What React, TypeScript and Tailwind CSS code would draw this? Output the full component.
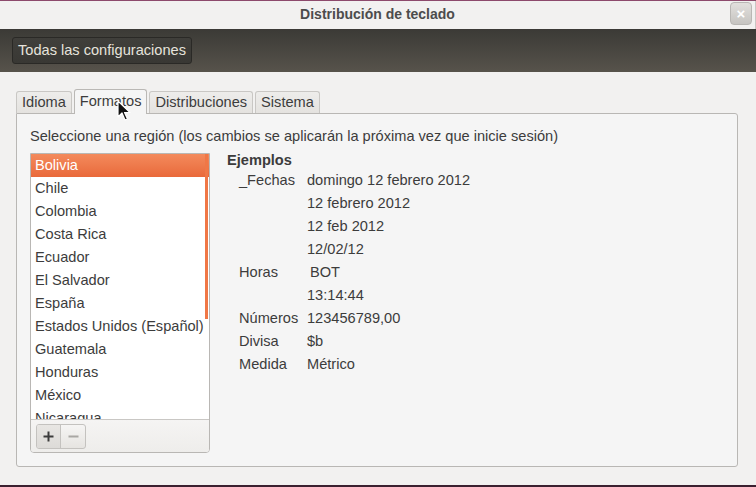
import React from "react";

const regions = [
  "Bolivia",
  "Chile",
  "Colombia",
  "Costa Rica",
  "Ecuador",
  "El Salvador",
  "España",
  "Estados Unidos (Español)",
  "Guatemala",
  "Honduras",
  "México",
  "Nicaragua",
];

const examples: [string, string, string?][] = [
  ["_Fechas", "domingo 12 febrero 2012"],
  ["", "12 febrero 2012"],
  ["", "12 feb 2012"],
  ["", "12/02/12"],
  ["Horas", "BOT", "pl-[3px]"],
  ["", "13:14:44"],
  ["Números", "123456789,00"],
  ["Divisa", "$b"],
  ["Medida", "Métrico"],
];

function Tab({ label, active = false }: { label: string; active?: boolean }) {
  if (active) {
    return (
      <div className="relative z-10 -mb-px flex h-[25px] items-center rounded-t-[3px] border border-b-0 border-[#bab8b5] bg-[#f5f5f5] px-[5px]">
        {label}
      </div>
    );
  }
  return (
    <div className="flex h-[22px] items-center rounded-t-[3px] border border-b-0 border-[#c9c7c4] bg-gradient-to-b from-[#eeedeb] to-[#e4e2df] px-[5px]">
      {label}
    </div>
  );
}

export default function App() {
  return (
    <div
      className="relative flex h-[487px] w-[756px] flex-col overflow-hidden border-t border-[#8d4a6c] bg-[#f2f1f0] text-[14.6px] text-[#3c3c3c]"
      style={{ fontFamily: '"Liberation Sans", Arial, sans-serif' }}
    >
      {/* title bar */}
      <div className="relative flex h-[28px] items-center justify-center border-r border-[#c9c7c4]">
        <span className="-mt-[2px] text-[14px] font-bold text-[#4c4c4c]">Distribución de teclado</span>
        <div className="absolute right-[3px] top-[1px] flex h-[23px] w-[22px] items-center justify-center rounded-[4px] border border-[#b9b7b4] bg-gradient-to-b from-[#e2e0dd] to-[#c6c4c1] text-[15px] font-bold leading-none text-white">
          ×
        </div>
      </div>

      {/* toolbar */}
      <div className="flex h-[43px] items-center bg-gradient-to-b from-[#3b3a36] to-[#57534b] px-3">
        <div className="flex h-[27px] items-center rounded-[3px] border border-[#2a2926] bg-gradient-to-b from-[#403f3b] to-[#393834] px-[5px] text-[#e6e3dc]">
          Todas las configuraciones
        </div>
      </div>

      {/* body */}
      <div className="flex flex-1 flex-col pl-4 pr-[18px] pt-[17px]">
        <div className="flex items-end gap-[2px]">
          <Tab label="Idioma" />
          <Tab label="Formatos" active />
          <Tab label="Distribuciones" />
          <Tab label="Sistema" />
        </div>

        <div className="flex h-[354px] flex-col rounded-b-[3px] rounded-tr-[3px] border border-[#b9b7b4] bg-[#f5f5f5] pl-[13px] pt-[11px]">
          <div className="h-[28px] leading-[22px]">
            Seleccione una región (los cambios se aplicarán la próxima vez que inicie sesión)
          </div>

          <div className="flex gap-[17px]">
            {/* region list */}
            <div className="flex h-[300px] w-[180px] flex-col overflow-hidden rounded-b-[4px] border border-[#b9b7b4] bg-white">
              <div className="relative h-[266px] overflow-hidden">
                {regions.map((r, i) => (
                  <div
                    key={r}
                    className={
                      i === 0
                        ? "flex h-[23px] items-center bg-gradient-to-b from-[#f38a5c] to-[#e9693a] pl-1 text-white"
                        : "flex h-[23px] items-center pl-1"
                    }
                  >
                    {r}
                  </div>
                ))}
                <div className="absolute right-px top-0 h-[165px] w-[3px] bg-[#f07746]" />
              </div>
              <div className="flex h-[33px] items-center border-t border-[#c9c7c4] bg-gradient-to-b from-[#f5f4f3] to-[#eeedeb] pl-[5px]">
                <div className="flex h-[25px] overflow-hidden rounded-[3px] border border-[#c4c2bf] bg-gradient-to-b from-[#f6f5f4] to-[#e6e4e1]">
                  <div className="flex w-[24px] items-center justify-center border-r border-[#c4c2bf] bg-gradient-to-b from-[#e8e6e3] to-[#dddbd8]">
                    <svg width="11" height="11" viewBox="0 0 11 11">
                      <path d="M5.5 0.5v10M0.5 5.5h10" stroke="#3c3c3c" strokeWidth="2" />
                    </svg>
                  </div>
                  <div className="flex w-[24px] items-center justify-center">
                    <svg width="11" height="11" viewBox="0 0 11 11">
                      <path d="M0.5 5.5h10" stroke="#a9a7a4" strokeWidth="2" />
                    </svg>
                  </div>
                </div>
              </div>
            </div>

            {/* examples */}
            <div className="flex flex-col">
              <div className="h-[16px] font-bold leading-[14px]">Ejemplos</div>
              <div className="grid grid-cols-[68px_auto] pl-[12px]">
                {examples.map(([k, v, extra], i) => (
                  <React.Fragment key={i}>
                    <div className="h-[23px] leading-[23px]">{k}</div>
                    <div className={`h-[23px] leading-[23px] ${extra ?? ""}`}>{v}</div>
                  </React.Fragment>
                ))}
              </div>
            </div>
          </div>
        </div>
      </div>

      <div className="h-[2px] bg-[#3b2030]" />

      {/* mouse pointer */}
      <svg className="absolute left-[117px] top-[99px] z-20" width="14" height="22" viewBox="0 0 14 22">
        <path
          d="M1 1v16l4-4 3 7 2.5-1-3-6.5h5.5z"
          fill="#111"
          stroke="#fff"
          strokeWidth="1.2"
          strokeLinejoin="round"
        />
      </svg>
    </div>
  );
}
